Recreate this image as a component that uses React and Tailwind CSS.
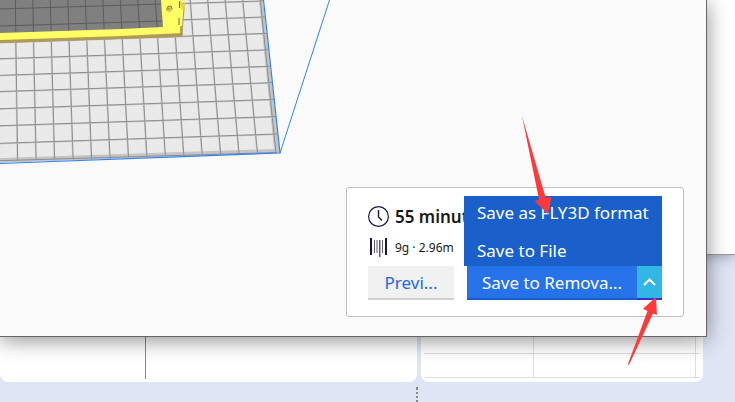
const verticals = Array.from({ length: 17 }, (_, i) => [260.3 - 17.5 * i, 276.7 - 18.5 * i]);
const horizontals = [
  [9, 0.5], [26, 16.5], [42.5, 33], [58.7, 49.5], [75.3, 66],
  [91.5, 82.5], [108.7, 99.3], [125.7, 116.5], [143.3, 134], [160.7, 152.5],
];

function BuildPlate() {
  return (
    <svg className="absolute left-0 top-0" width="340" height="170" viewBox="0 0 340 170" aria-hidden="true">
      <defs>
        <clipPath id="plate"><path d="M0 0H263L280 153L0 163Z" /></clipPath>
        <pattern id="dots" width="2" height="2" patternUnits="userSpaceOnUse">
          <rect width="2" height="2" fill="#ebebeb" />
          <rect width="1" height="1" fill="#e5e5e5" />
        </pattern>
      </defs>
      <g clipPath="url(#plate)">
        <path d="M0 0H263L280 153L0 163Z" fill="#c4c4c4" />
        <path d="M0 0H259L274 149L0 158Z" fill="url(#dots)" />
        <g fill="none">
          {verticals.map(([a, b], i) => (
            <g key={i}>
              <path d={`M${a - 0.6} 0L${b - 0.6} 160`} stroke="#c6c6c6" />
              <path d={`M${a} 0L${b} 160`} stroke="#8c8c8e" />
            </g>
          ))}
          {horizontals.map(([a, b], i) => (
            <g key={i}>
              <path d={`M0 ${a + 0.6}L277 ${b + 0.6}`} stroke="#c6c6c6" />
              <path d={`M0 ${a}L277 ${b}`} stroke="#8c8c8e" />
            </g>
          ))}
        </g>
      </g>
      <path d="M0 0H163V30L0 35Z" fill="#808080" />
      <g stroke="#5c5c5c" fill="none">
        {verticals.slice(6).map(([a, b], i) => (
          <path key={i} d={`M${a} 0L${a + (b - a) * 0.2} 32`} />
        ))}
        <path d="M0 9L163 4M0 26L163 21" />
      </g>
      <path d="M0 38L182 31L183 35L180 37L120 39L60 41L0 43Z" fill="#b09b55" />
      <path d="M161 0H180L185 2V10L183 14L182 33L121 36L61 38L0 40V33L61 31L121 29L163 27Z" fill="#ffff66" />
      <path d="M180 2L185 2V10L181 9Z" fill="#e6cf58" />
      <path d="M184 9L183 20L182 34" stroke="#b09b55" fill="none" />
      <path d="M179.500 1V8M179 18V25M181 26V33" stroke="#6d622c" fill="none" />
      <path d="M166 10L168 6H171L173 9L171 12H168Z" fill="#e0c860" />
      <path d="M166.500 10L168 6.500L171 6L172 9M169 8V10" fill="none" stroke="#8a7a3a" />
      <path d="M263.500 0L280 153L0 163.500" fill="none" stroke="#2f80ff" strokeWidth="1.200" />
      <path d="M280 153L329.500 0" fill="none" stroke="#2f80ff" />
    </svg>
  );
}

function ClockIcon() {
  return (
    <svg className="shrink-0" width="22" height="22" viewBox="0 0 22 22" fill="none" stroke="#191446" strokeWidth="1.200" aria-hidden="true">
      <circle cx="10.500" cy="10.500" r="9.900" />
      <path d="M10.500 4V11L14 14.500" strokeWidth="1.400" />
    </svg>
  );
}

function SpoolIcon() {
  return (
    <svg className="shrink-0" width="22" height="20" viewBox="0 0 22 20" fill="#191446" aria-hidden="true">
      <path d="M2 0H4V17H2ZM17 0H19V17H17Z" />
      <path d="M6 2H7V15H6ZM8.500 2H9.500V15H8.500ZM11 2H12.500V19H11ZM14 2H15V15H14Z" opacity="0.700" />
    </svg>
  );
}

function Arrows() {
  return (
    <svg className="pointer-events-none absolute bottom-0 right-0" width="735" height="402" viewBox="0 0 735 402" fill="#fd3a3a" aria-hidden="true">
      <path d="M522 116L545.700 197.700L551.500 197L548 214L534.700 201.300L539 199.500Z" />
      <path d="M656 297L657 315L653 313.500L629 365L628 364L647.500 311L643 308.700Z" />
    </svg>
  );
}

function Backdrop() {
  return (
    <div className="absolute inset-0 flex flex-col">
      <div className="h-[255px] shrink-0 border-b border-[#999] bg-white shadow-[0_2px_12px_rgba(60,60,90,0.4)]" />
      <div className="flex h-[127px] shrink-0 gap-1 pr-8">
        <div className="flex w-[417px] shrink-0 rounded-b-lg bg-white pb-[3px]">
          <div className="w-[146px] border-r border-[#888]" />
        </div>
        <div className="flex grow flex-col rounded-b-lg bg-white pb-1 pl-[3px] pr-[3px]">
          <div className="flex grow border-b border-[#ddd]">
            <div className="w-[110px] border-r border-[#ddd]" />
            <div className="mr-1 grow border-r border-[#ddd]" />
          </div>
          <div className="flex h-6 border-b border-[#ddd]">
            <div className="w-[110px] border-r border-[#ddd]" />
            <div className="mr-1 grow border-r border-[#ddd]" />
          </div>
        </div>
      </div>
      <div className="flex grow flex-col gap-[2px] pl-[416px] pt-[5px]">
        <span className="h-[3px] w-[2px] shrink-0 bg-[#888880]" />
        <span className="h-[2px] w-[2px] shrink-0 bg-[#888880]" />
        <span className="h-[2px] w-[2px] shrink-0 bg-[#888880]" />
        <span className="h-[2px] w-[2px] shrink-0 bg-[#888880]" />
      </div>
    </div>
  );
}

export default function App() {
  return (
    <main className="relative h-screen min-h-[402px] overflow-hidden bg-[#dfe5f5] font-['Noto_Sans',sans-serif]">
      <Backdrop />
      <section className="absolute bottom-[65px] left-0 right-7 top-0 flex items-end justify-end border-b border-r border-[#666] bg-[#fafafa] pb-[19px] pr-[22px] shadow-[0_3px_20px_rgba(0,0,0,0.45)]">
        <BuildPlate />
        <div className="relative flex w-[338px] flex-col rounded-[3px] border border-[#c0c0c0] bg-white px-[21px] py-4">
          <div className="flex h-[26px] items-center gap-[5px] text-[17px] font-semibold text-[#191919]">
            <ClockIcon />
            <span className="w-[69px] overflow-hidden whitespace-nowrap">55 minutes</span>
          </div>
          <div className="mt-[6px] flex h-6 items-center gap-[5px] text-xs text-[#191919]">
            <SpoolIcon />
            <span>9g · 2.96m</span>
          </div>
          <div className="mt-[6px] flex gap-[13px]">
            <button className="h-[34px] w-[86px] border-b-2 border-[#d0d0d0] bg-[#f0f0f0] pt-[2px] text-[17px] text-[#2068e0]">Previ...</button>
            <div className="relative flex grow">
              <button className="h-[34px] grow border-b-2 border-[#1a5dc8] bg-[#2672e9] pt-[2px] text-[17px] text-white">Save to Remova...</button>
              <button aria-label="More save options" className="flex h-[34px] w-[25px] items-center justify-center border-b-2 border-[#3b2fd0] bg-[#32b6e6]">
                <svg width="13" height="8" viewBox="0 0 13 8" fill="none" stroke="white" strokeWidth="2" aria-hidden="true"><path d="M1 7L6.500 1.500L12 7" /></svg>
              </button>
              <div className="absolute -left-[3px] bottom-full right-0 flex h-[70px] flex-col gap-[14px] bg-[#1b5fca] px-[13px] pt-[5px] text-[17px] leading-6 text-white">
                <button className="whitespace-nowrap text-left">Save as FLY3D format</button>
                <button className="whitespace-nowrap text-left">Save to File</button>
              </div>
            </div>
          </div>
        </div>
      </section>
      <Arrows />
    </main>
  );
}
